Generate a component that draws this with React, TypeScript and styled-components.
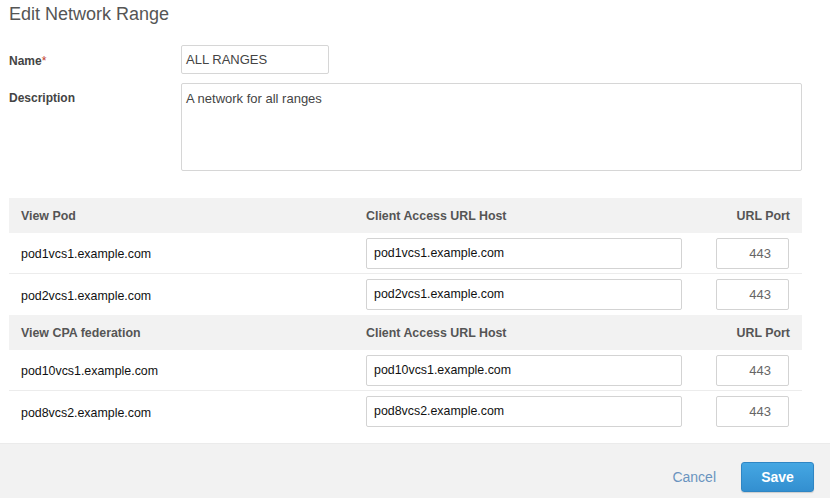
import React from "react";
import styled, { createGlobalStyle } from "styled-components";

const Global = createGlobalStyle`
  html, body { margin: 0; padding: 0; background: #fff; }
  body { font-family: "Liberation Sans", Arial, Helvetica, sans-serif; }
  * { box-sizing: border-box; }
`;

const Page = styled.div`
  width: 830px;
  height: 498px;
  display: flex;
  flex-direction: column;
  overflow: hidden;
`;

const Body = styled.div`
  flex: 1;
  padding: 4px 28px 0 9px;
  display: flex;
  flex-direction: column;
`;

const Title = styled.h1`
  margin: 0;
  font-size: 18px;
  font-weight: normal;
  color: #555;
  line-height: 20px;
  height: 20px;
`;

const FormRow = styled.div<{ $top: number }>`
  display: flex;
  align-items: flex-start;
  margin-top: ${(p) => p.$top}px;
`;

const Label = styled.label<{ $pad: number }>`
  width: 172px;
  flex: none;
  font-size: 12px;
  font-weight: bold;
  color: #444;
  padding-top: ${(p) => p.$pad}px;
`;

const Star = styled.span`
  color: #c0392b;
  font-weight: normal;
`;

const TextInput = styled.div`
  width: 148px;
  height: 29px;
  border: 1px solid #d6d6d6;
  border-radius: 2px;
  font-size: 13px;
  color: #444;
  padding: 0 4px;
  line-height: 27px;
`;

const TextArea = styled.div`
  width: 621px;
  height: 88px;
  border: 1px solid #d6d6d6;
  border-radius: 2px;
  font-size: 13px;
  color: #444;
  padding: 7px 4px;
`;

const Table = styled.div`
  margin-top: 27px;
  width: 793px;
  display: grid;
  grid-template-columns: 357px 316px 1fr;
`;

const HeadCell = styled.div<{ $right?: boolean; $first?: boolean }>`
  height: 35px;
  background: #f2f2f2;
  display: flex;
  align-items: center;
  justify-content: ${(p) => (p.$right ? "flex-end" : "flex-start")};
  padding: 0 ${(p) => (p.$right ? 12 : 0)}px 0 ${(p) => (p.$first ? 12 : 0)}px;
  font-size: 12.4px;
  font-weight: bold;
  color: #555;
`;

const Cell = styled.div<{ $last?: boolean; $right?: boolean }>`
  height: 41px;
  border-bottom: ${(p) => (p.$last ? "none" : "1px solid #ececec")};
  display: flex;
  align-items: center;
  justify-content: ${(p) => (p.$right ? "flex-end" : "flex-start")};
  padding-right: ${(p) => (p.$right ? 13 : 0)}px;
`;

const PodName = styled.span`
  padding-left: 12px;
  font-family: "Liberation Sans", Arial, sans-serif;
  font-size: 12.4px;
  color: #111;
  padding-top: 2px;
`;

const HostInput = styled.div`
  width: 316px;
  height: 31px;
  border: 1px solid #d3d3d3;
  border-radius: 2px;
  font-family: "Liberation Sans", Arial, sans-serif;
  font-size: 12.4px;
  color: #111;
  padding: 0 7px 1px;
  display: flex;
  align-items: center;
`;

const PortInput = styled.div`
  width: 73px;
  height: 31px;
  border: 1px solid #d3d3d3;
  border-radius: 2px;
  font-family: "Liberation Sans", Arial, sans-serif;
  font-size: 13px;
  color: #666;
  padding-right: 17px;
  display: flex;
  align-items: center;
  justify-content: flex-end;
`;

const Footer = styled.div`
  height: 55px;
  background: #f2f2f2;
  border-top: 1px solid #ebebeb;
  display: flex;
  justify-content: flex-end;
  align-items: flex-start;
  gap: 25px;
  padding: 18px 16px 0 0;
`;

const CancelButton = styled.button`
  border: none;
  background: none;
  padding: 0;
  height: 30px;
  font-family: "Liberation Sans", Arial, sans-serif;
  font-size: 14px;
  color: #6a94bf;
`;

const SaveButton = styled.button`
  width: 73px;
  height: 30px;
  border: 1px solid #2f86c4;
  border-radius: 3px;
  background: linear-gradient(#45a7e3, #338fd0);
  color: #fff;
  font-family: "Liberation Sans", Arial, sans-serif;
  font-size: 14px;
  font-weight: bold;
  box-shadow: 0 1px 1px rgba(0, 0, 0, 0.15);
`;

type Row = { name: string; host: string; port: string };

const sections: { title: string; rows: Row[] }[] = [
  {
    title: "View Pod",
    rows: [
      { name: "pod1vcs1.example.com", host: "pod1vcs1.example.com", port: "443" },
      { name: "pod2vcs1.example.com", host: "pod2vcs1.example.com", port: "443" },
    ],
  },
  {
    title: "View CPA federation",
    rows: [
      { name: "pod10vcs1.example.com", host: "pod10vcs1.example.com", port: "443" },
      { name: "pod8vcs2.example.com", host: "pod8vcs2.example.com", port: "443" },
    ],
  },
];

export default function App() {
  return (
    <Page>
      <Global />
      <Body>
        <Title>Edit Network Range</Title>
        <FormRow $top={21}>
          <Label $pad={9}>
            Name<Star>*</Star>
          </Label>
          <TextInput>ALL RANGES</TextInput>
        </FormRow>
        <FormRow $top={9}>
          <Label $pad={8}>Description</Label>
          <TextArea>A network for all ranges</TextArea>
        </FormRow>
        <Table>
          {sections.map((s) => (
            <React.Fragment key={s.title}>
              <HeadCell $first>{s.title}</HeadCell>
              <HeadCell>Client Access URL Host</HeadCell>
              <HeadCell $right>URL Port</HeadCell>
              {s.rows.map((r, ri) => {
                const noBorder = ri === s.rows.length - 1;
                return (
                  <React.Fragment key={r.name}>
                    <Cell $last={noBorder}>
                      <PodName>{r.name}</PodName>
                    </Cell>
                    <Cell $last={noBorder}>
                      <HostInput>{r.host}</HostInput>
                    </Cell>
                    <Cell $last={noBorder} $right>
                      <PortInput>{r.port}</PortInput>
                    </Cell>
                  </React.Fragment>
                );
              })}
            </React.Fragment>
          ))}
        </Table>
      </Body>
      <Footer>
        <CancelButton>Cancel</CancelButton>
        <SaveButton>Save</SaveButton>
      </Footer>
    </Page>
  );
}
